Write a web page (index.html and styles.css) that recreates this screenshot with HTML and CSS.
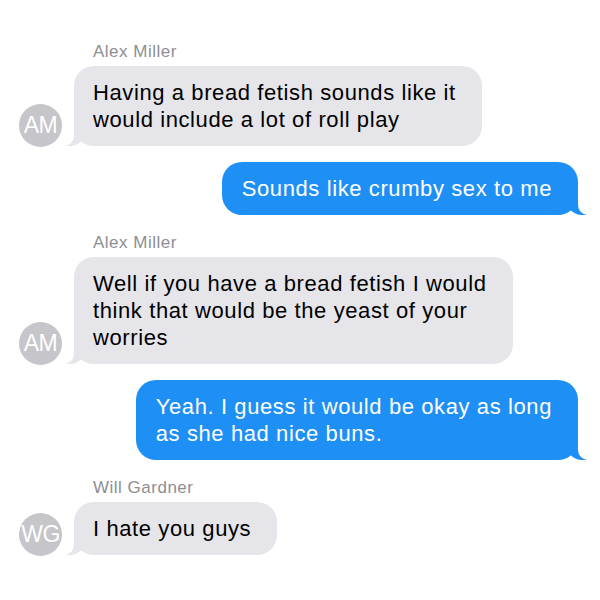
FILE: index.html
```html
<!doctype html>
<html lang="en">
<head>
    <meta charset="UTF-8">
    <title>Messages</title>
    <link rel="stylesheet" href="styles.css">
</head>
<body>

<div class="thread">
    <div class="name">Alex Miller</div>
    <div class="row in">
        <div class="avatar">AM</div>
        <div class="bubble">Having a bread fetish sounds like it<br>would include a lot of roll play</div>
    </div>

    <div class="row out">
        <div class="bubble">Sounds like crumby sex to me</div>
    </div>

    <div class="name">Alex Miller</div>
    <div class="row in">
        <div class="avatar">AM</div>
        <div class="bubble">Well if you have a bread fetish I would<br>think that would be the yeast of your<br>worries</div>
    </div>

    <div class="row out">
        <div class="bubble">Yeah. I guess it would be okay as long<br>as she had nice buns.</div>
    </div>

    <div class="name">Will Gardner</div>
    <div class="row in">
        <div class="avatar">WG</div>
        <div class="bubble">I hate you guys</div>
    </div>
</div>

</body>
</html>
```

FILE: styles.css
```css
body {
    margin: 0;
    background: #fff;
    font-family: "Liberation Sans", Arial, sans-serif;
}

.thread {
    display: flex;
    flex-direction: column;
    padding: 43px 22px 0 19px;
}

.name {
    font-size: 17px;
    line-height: 18px;
    letter-spacing: 0.5px;
    color: #8e8e93;
    margin: 0 0 5px 74px;
}

.row {
    display: flex;
    align-items: flex-end;
    margin-bottom: 16px;
}

.row.out + .name {
    margin-top: 3px;
}

.row.out {
    justify-content: flex-end;
}

.avatar {
    width: 43px;
    height: 43px;
    border-radius: 50%;
    background: #c5c5ca;
    color: #fff;
    font-size: 23px;
    letter-spacing: -0.5px;
    display: flex;
    align-items: center;
    justify-content: center;
    margin-right: 12px;
    margin-bottom: -1px;
}

.bubble {
    position: relative;
    font-size: 22px;
    line-height: 27px;
    letter-spacing: 0.6px;
    padding: 13px 26px 13px 19px;
    border-radius: 20px;
}

.in .bubble {
    background: #e5e5ea;
    color: #000;
}

.out .bubble {
    background: #1e8ff5;
    color: #fff;
    padding-left: 20px;
}

.bubble::before,
.bubble::after {
    content: "";
    position: absolute;
    bottom: 0;
    height: 20px;
}

.in .bubble::before {
    left: -8px;
    width: 20px;
    background: #e5e5ea;
    border-bottom-right-radius: 16px;
}

.in .bubble::after {
    left: -10px;
    width: 10px;
    background: #fff;
    border-bottom-right-radius: 10px;
}

.out .bubble::before {
    right: -8px;
    width: 20px;
    background: #1e8ff5;
    border-bottom-left-radius: 16px;
}

.out .bubble::after {
    right: -10px;
    width: 10px;
    background: #fff;
    border-bottom-left-radius: 10px;
}
```
